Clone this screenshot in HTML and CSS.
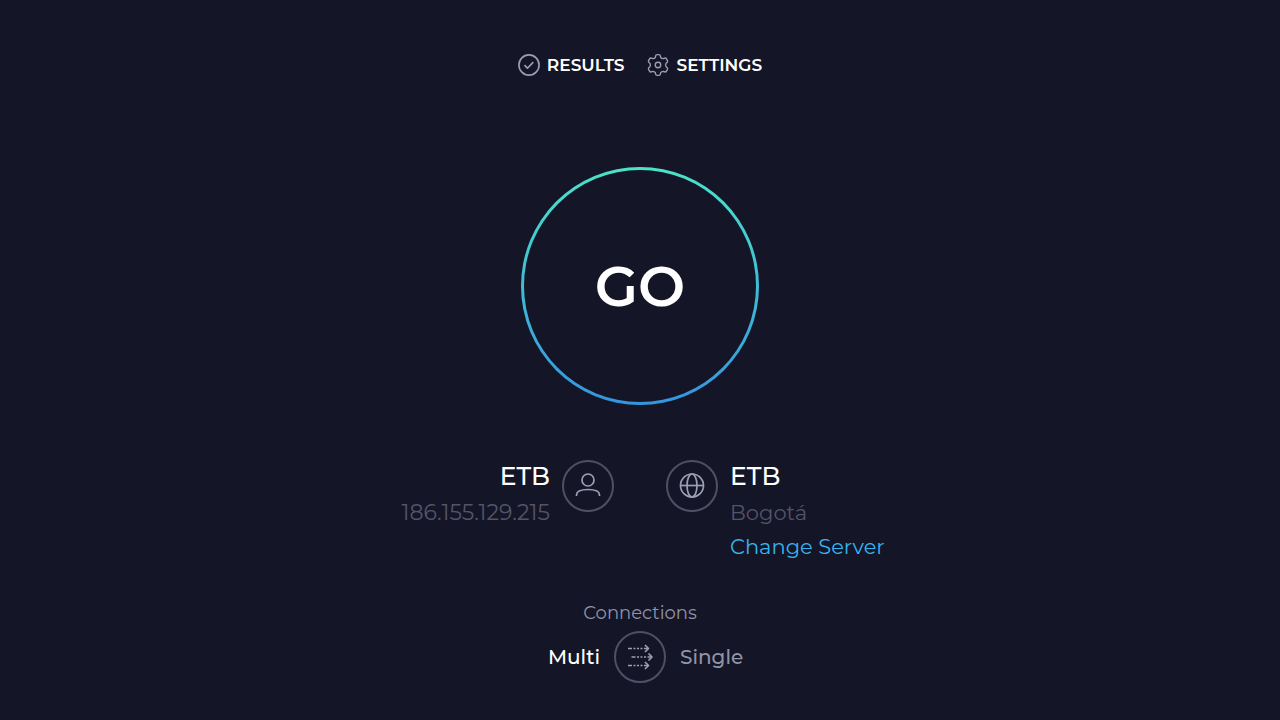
FILE: index.html
```html
<!DOCTYPE html>
<html lang="en">
<head>
    <meta charset="UTF-8">
    <meta name="viewport" content="width=device-width, initial-scale=1.0">
    <title>Speed Test</title>
    <link rel="stylesheet" href="styles.css">
</head>
<body>
<nav class="nav">
    <a class="nav-link" href="#results">
        <svg class="nav-icon" viewBox="0 0 24 24">
            <circle cx="12" cy="12" r="11"/>
            <path d="M7 12.2l3.3 3.3 6.4-6.6"/>
        </svg>
        Results
    </a>
    <a class="nav-link" href="#settings">
        <svg class="nav-icon nav-icon-gear" viewBox="0 0 24 24">
            <path d="M9.4 2Q9.6 .7 11 .7H13Q14.4 .7 14.6 2L14.9 3.6Q15.8 5.2 17.8 5.1L19.2 4.5Q20.5 4.1 21.2 5.3L22.2 7Q22.9 8.3 21.9 9.2L20.8 10.2Q19.6 12 20.8 13.8L21.9 14.8Q22.9 15.7 22.2 17L21.2 18.7Q20.5 19.9 19.2 19.5L17.8 18.9Q15.8 18.8 14.9 20.4L14.6 22Q14.4 23.3 13 23.3H11Q9.6 23.3 9.4 22L9.1 20.4Q8.2 18.8 6.2 18.9L4.8 19.5Q3.5 19.9 2.8 18.7L1.8 17Q1.1 15.7 2.1 14.8L3.2 13.8Q4.4 12 3.2 10.2L2.1 9.2Q1.1 8.3 1.8 7L2.8 5.3Q3.5 4.1 4.8 4.5L6.2 5.1Q8.2 5.2 9.1 3.6Z"/>
            <circle cx="12" cy="12" r="3"/>
        </svg>
        Settings
    </a>
</nav>

<main>
    <button type="button" class="go">GO</button>

    <div class="info">
        <section class="host host-client">
            <div class="host-text">
                <h2>ETB</h2>
                <p>186.155.129.215</p>
            </div>
            <span class="round">
                <svg viewBox="0 0 52 52">
                    <circle cx="26" cy="20" r="6"/>
                    <path d="M14.5 36v-1c0-4 4.5-5.5 11.5-5.5s11.5 1.5 11.5 5.5v1"/>
                </svg>
            </span>
        </section>
        <section class="host">
            <span class="round">
                <svg viewBox="0 0 52 52">
                    <circle cx="26" cy="25.5" r="11.5"/>
                    <ellipse cx="26" cy="25.5" rx="5" ry="11.5"/>
                    <path d="M14.5 25.5h23"/>
                </svg>
            </span>
            <div class="host-text">
                <h2>ETB</h2>
                <p>Bogotá</p>
                <a href="#servers">Change Server</a>
            </div>
        </section>
    </div>

    <section class="connections">
        <h3 id="connections">Connections</h3>
        <div class="modes">
            <span class="mode mode-active">Multi</span>
            <button type="button" class="round" aria-labelledby="connections">
                <svg viewBox="0 0 52 52">
                    <path class="dots" d="M14 17.5h20M17.5 26h20M14 34.5h20"/>
                    <path d="M31 14l3.5 3.5L31 21M34.5 22.5L38 26l-3.5 3.5M31 31l3.5 3.5L31 38"/>
                </svg>
            </button>
            <span class="mode">Single</span>
        </div>
    </section>
</main>
</body>
</html>
```
FILE: styles.css
```css
* {
    box-sizing: border-box;
}

body {
    margin: 0;
    padding: 52px 20px 36px;
    background-color: #141526;
    color: #ffffff;
    font-family: Montserrat, Inter, sans-serif;
}

h2, h3, p {
    margin: 0;
    font-weight: 400;
}

a {
    text-decoration: none;
}

button {
    padding: 0;
    background: none;
    color: inherit;
    font-family: inherit;
    cursor: pointer;
}

svg {
    display: block;
    fill: none;
    stroke: #9c9eb2;
    stroke-width: 1.7;
    stroke-linejoin: round;
}

/* Top navigation */
.nav {
    display: flex;
    justify-content: center;
    gap: 23px;
}

.nav-link {
    display: flex;
    align-items: center;
    gap: 7px;
    color: #ffffff;
    font-size: 17px;
    font-weight: 600;
    line-height: 26px;
    text-transform: uppercase;
}

.nav-icon {
    width: 22px;
    height: 22px;
    stroke-width: 1.8;
}

.nav-icon-gear {
    stroke-width: 1.5;
    overflow: visible;
}

main {
    display: flex;
    flex-direction: column;
    align-items: center;
}

/* Start button, the ring is a gradient under a transparent border */
.go {
    width: 238px;
    height: 238px;
    margin-top: 89px;
    border: 3px solid transparent;
    border-radius: 50%;
    background: linear-gradient(#141526, #141526) padding-box,
        linear-gradient(#4be3c8, #40bdd4 50%, #3495de) border-box;
    font-size: 56px;
    font-weight: 600;
}

/* Client and server */
.info {
    display: grid;
    grid-template-columns: 1fr 1fr;
    gap: 52px;
    width: 100%;
    margin-top: 55px;
}

.host {
    display: flex;
    gap: 12px;
}

.host-client {
    justify-content: flex-end;
    text-align: right;
}

.host-text {
    font-size: 21px;
    line-height: 34px;
}

.host-text h2 {
    margin-bottom: 4px;
    font-size: 25px;
    font-weight: 500;
    line-height: 32px;
}

.host-text p {
    color: #535468;
}

.host-client p {
    font-size: 22px;
}

.host-text a {
    color: #36b4f0;
}

.round {
    flex: none;
    width: 52px;
    height: 52px;
    border: 2px solid #4f5064;
    border-radius: 50%;
}

.round svg {
    width: 52px;
    height: 52px;
    margin: -2px;
}

/* Connections */
.connections {
    width: 100%;
    margin-top: 36px;
    text-align: center;
}

.connections h3 {
    color: #9193a8;
    font-size: 18px;
    line-height: 26px;
}

.modes {
    display: grid;
    grid-template-columns: 1fr auto 1fr;
    align-items: center;
    gap: 14px;
    margin-top: 5px;
}

.mode {
    color: #9193a8;
    font-size: 20px;
    font-weight: 500;
    text-align: left;
}

.mode-active {
    color: #ffffff;
    text-align: right;
}

.dots {
    stroke-dasharray: 4 1.5 2 1.5 2 1.5 2 1.5 8;
}
```
